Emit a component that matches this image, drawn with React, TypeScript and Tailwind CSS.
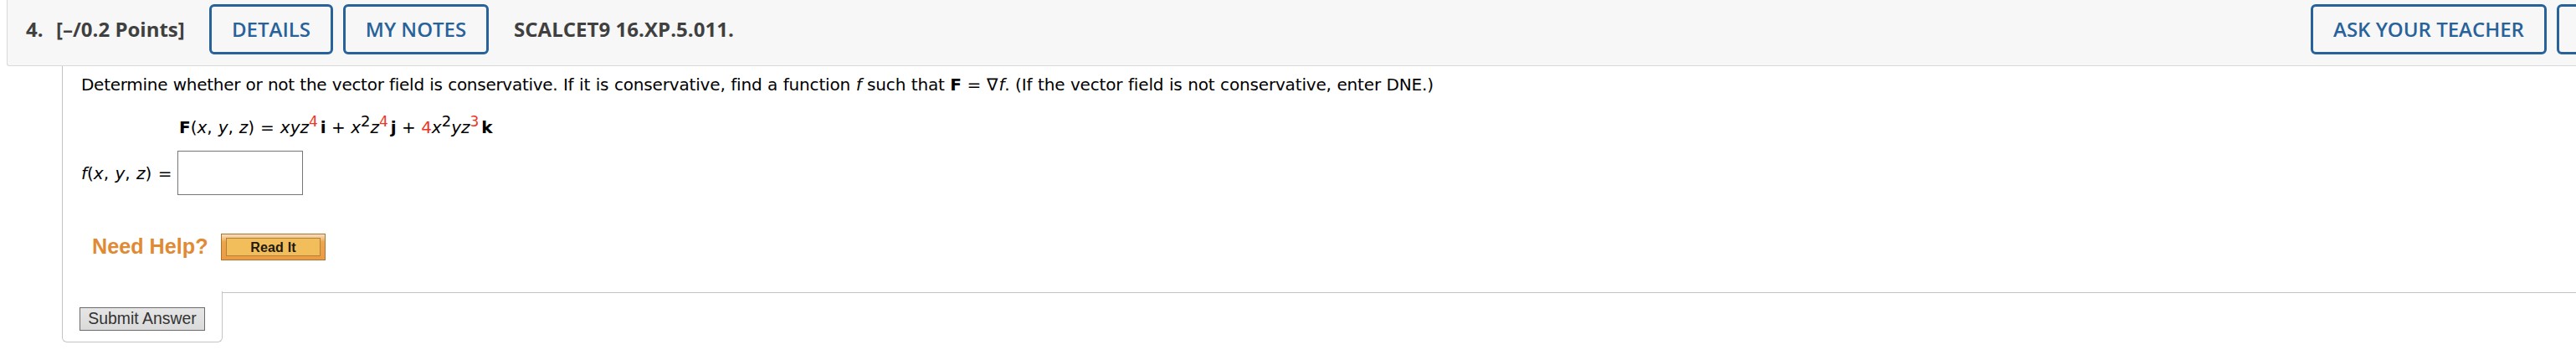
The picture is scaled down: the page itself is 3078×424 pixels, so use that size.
import type { ReactNode } from "react";
import { clsx } from "clsx";

/** Outlined action button in the question header. */
function HeaderButton({ className, children }: { className?: string; children?: ReactNode }) {
  return (
    <button
      type="button"
      className={clsx(
        "flex h-15 shrink-0 items-center justify-center whitespace-nowrap rounded-md border-3 border-[#28629a] text-2xl font-semibold text-[#28629a]",
        className,
      )}
    >
      {children}
    </button>
  );
}

/** Exponent; the randomized ones are drawn in red. */
function Sup({ className, children }: { className?: string; children: ReactNode }) {
  return <span className={clsx("relative -top-2", className ?? "text-[18px]")}>{children}</span>;
}

function QuestionHeader() {
  return (
    <header className="ml-2 flex h-[79px] items-start overflow-hidden rounded-bl-[3px] border-b border-l border-[#d9d9d9] bg-[#f7f7f7] pt-[5px] font-['Open_Sans',sans-serif] text-2xl font-bold whitespace-nowrap text-[#404040]">
      <span className="ml-[22px] w-9 leading-[60px]">4.</span>
      <span className="w-[183px] leading-[60px]">[–/0.2 Points]</span>
      <HeaderButton className="w-[148px]">DETAILS</HeaderButton>
      <HeaderButton className="ml-3 w-[174px]">MY NOTES</HeaderButton>
      <span className="ml-[30px] leading-[60px] tracking-[0.04px]">SCALCET9 16.XP.5.011.</span>
      <div className="ml-auto flex gap-3">
        <HeaderButton className="w-[282px]">ASK YOUR TEACHER</HeaderButton>
        <HeaderButton className="-mr-[260px] w-[283px]" />
      </div>
    </header>
  );
}

function Question() {
  return (
    <section className="ml-[74px] h-[269px] border-l border-[#c4c4c4] pl-[22px] font-['DejaVu_Sans',sans-serif] text-xl text-black">
      <p className="h-[51px] pt-2 leading-7 [word-spacing:0.4px] whitespace-nowrap">
        <span className="tracking-[-0.28px]">Determine whether or not the vector field is conservative. </span>
        <span className="tracking-[-0.17px]">
          If it is conservative, find a function <i>f</i> such that <b>F</b> ={" "}
          <span className="mr-0.5 font-['Liberation_Serif',serif]">∇</span>
          <i>f</i>.{" "}
        </span>
        <span className="tracking-[-0.16px]">(If the vector field is not conservative, enter DNE.)</span>
      </p>
      <p className="ml-[117px] h-[50px] pt-2 leading-7 whitespace-nowrap">
        <span className="[word-spacing:0.6px]">
          <b>F</b>(<i>x</i>, <i>y</i>, <i>z</i>) = <i>xyz</i>
        </span>
        <Sup className="mr-[3px] text-[17px] text-[#ee3524]">4</Sup>
        <b>i</b> + <i>x</i>
        <Sup>2</Sup>
        <i>z</i>
        <Sup className="mr-[3px] text-[17px] text-[#ee3524]">4</Sup>
        <b>j</b> + <span className="text-[#ee3524]">4</span>
        <i>x</i>
        <Sup>2</Sup>
        <i>yz</i>
        <Sup className="mr-[3px] text-[17px] text-[#ee3524]">3</Sup>
        <b>k</b>
      </p>
      <label className="flex h-[53px] items-center whitespace-nowrap">
        <span className="w-[115px] [word-spacing:1px]">
          <i>f</i>(<i>x</i>, <i>y</i>, <i>z</i>) =
        </span>
        <input className="h-[53px] w-[150px] border border-[#767676] bg-white" />
      </label>
      <div className="mt-[46px] flex h-8 items-center pl-[13px] font-['Liberation_Sans',sans-serif] font-bold">
        <span className="w-[154px] text-[25.2px] text-[#e08b34]">Need Help?</span>
        <button
          type="button"
          className="h-8 w-[125px] border border-[#a87534] bg-linear-to-b from-[#f8dfbd] via-[#eda54d] via-30% to-[#ed9b42] px-[5px] pt-1 pb-1"
        >
          <span className="flex h-[22px] items-center justify-center border border-[#b28039] bg-[#f2be5c] pt-0.5 text-base tracking-[0.2px] text-[#1e1a10]">
            Read It
          </span>
        </button>
      </div>
    </section>
  );
}

function SubmitBar() {
  return (
    <footer className="ml-[74px] flex">
      <div className="h-[61px] w-48 rounded-b-md border border-t-0 border-[#c4c4c4] pt-[19px] pl-5">
        <button
          type="button"
          className="flex h-7 w-[150px] items-center justify-center border border-[#6b6b6b] bg-linear-to-b from-[#e6e6e6] to-[#dadada] font-['Liberation_Sans',sans-serif] text-[19.4px] whitespace-nowrap text-[#333]"
        >
          Submit Answer
        </button>
      </div>
      <div className="mt-px flex-1 border-t border-[#c4c4c4]" />
    </footer>
  );
}

export default function App() {
  return (
    <main className="h-[424px] w-[3078px] overflow-hidden bg-white">
      <QuestionHeader />
      <Question />
      <SubmitBar />
    </main>
  );
}
